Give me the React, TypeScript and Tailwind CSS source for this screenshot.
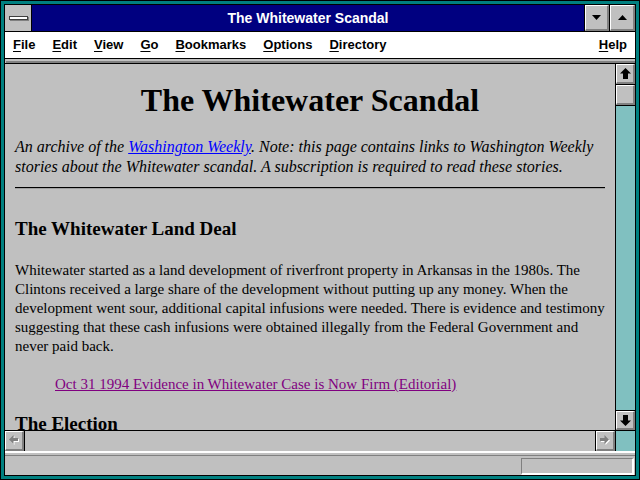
import React from 'react'

const dither = 'bg-[#80c0c0]'

function ArrowUp() {
  return (
    <svg width="11" height="11" viewBox="0 0 11 11">
      <polygon points="5.5,0 11,5.5 8,5.5 8,11 3,11 3,5.5 0,5.5" fill="#000" />
    </svg>
  )
}

function ArrowDown() {
  return (
    <svg width="11" height="11" viewBox="0 0 11 11">
      <polygon points="3,0 8,0 8,5.5 11,5.5 5.5,11 0,5.5 3,5.5" fill="#000" />
    </svg>
  )
}

function ArrowSide({ dir }: { dir: 'left' | 'right' }) {
  const pts =
    dir === 'left'
      ? '0,4.5 4.5,0 4.5,3 9,3 9,6 4.5,6 4.5,9'
      : '9,4.5 4.5,0 4.5,3 0,3 0,6 4.5,6 4.5,9'
  return (
    <svg width="11" height="11" viewBox="0 0 11 11">
      <polygon points={pts} fill="#fff" transform="translate(1,1)" />
      <polygon points={pts} fill="#808080" />
    </svg>
  )
}

function Raised({ className, children }: { className?: string; children?: React.ReactNode }) {
  return (
    <div
      className={`flex items-center justify-center bg-[#c0c0c0] border-t border-l border-t-white border-l-white border-b-2 border-r-2 border-b-[#808080] border-r-[#808080] ${className ?? ''}`}
    >
      {children}
    </div>
  )
}

function MenuItem({ label }: { label: string }) {
  return (
    <span>
      <span className="underline underline-offset-2">{label[0]}</span>
      {label.slice(1)}
    </span>
  )
}

export default function App() {
  return (
    <div className="w-[640px] h-[480px] bg-[#008080] border border-black p-[3px]">
      <div className="h-full border border-black flex flex-col bg-[#c0c0c0]">
        {/* Title bar */}
        <div className="h-[27px] flex border-b border-black bg-[#000080]">
          <div className="w-[27px] border-r border-black bg-[#c0c0c0] flex items-center justify-center">
            <div className="w-[19px] h-[4px] bg-white border border-[#404040] shadow-[1px_1px_0_#808080]" />
          </div>
          <div className="flex-1 flex items-center justify-center text-white font-bold text-[14px] font-['Liberation_Sans',Arial,sans-serif]">
            The Whitewater Scandal
          </div>
          <div className="w-[25px] border-l border-black flex">
            <Raised className="flex-1">
              <svg width="9" height="5" viewBox="0 0 9 5">
                <polygon points="0,0 9,0 4.5,5" fill="#000" />
              </svg>
            </Raised>
          </div>
          <div className="w-[26px] border-l border-black flex">
            <Raised className="flex-1">
              <svg width="9" height="5" viewBox="0 0 9 5">
                <polygon points="0,5 9,5 4.5,0" fill="#000" />
              </svg>
            </Raised>
          </div>
        </div>

        {/* Menu bar */}
        <div className="h-[27px] flex items-center border-b border-black bg-white pl-[8px] pr-[8px] text-[13px] font-bold text-black font-['Liberation_Sans',Arial,sans-serif]">
          <div className="flex gap-[17px]">
            <MenuItem label="File" />
            <MenuItem label="Edit" />
            <MenuItem label="View" />
            <MenuItem label="Go" />
            <MenuItem label="Bookmarks" />
            <MenuItem label="Options" />
            <MenuItem label="Directory" />
          </div>
          <div className="ml-auto">
            <MenuItem label="Help" />
          </div>
        </div>

        {/* top bevel */}
        <div className="h-[2px]" />
        <div className="h-[2px] bg-[#808080] ml-px" />
        <div className="h-px bg-black" />

        {/* Main */}
        <div className="h-[387px] flex">
          <div className="flex-1 flex flex-col min-w-0">
            <div className="h-[366px] overflow-hidden pl-[10px] pr-[10px] text-black font-['Liberation_Serif','Times_New_Roman',serif]">
              <h1 className="mt-[18px] text-center text-[32px] leading-[36px] font-bold">
                The Whitewater Scandal
              </h1>
              <p className="mt-[19px] italic text-[16px] leading-[20px]">
                An archive of the <span className="text-[#0000ff] underline">Washington Weekly</span>.
                Note: this page contains links to Washington Weekly stories about the Whitewater
                scandal. A subscription is required to read these stories.
              </p>
              <div className="mt-[10px] border-t border-black border-b border-b-[#a0a0a0]" />
              <h2 className="mt-[28px] text-[19px] leading-[24px] font-bold">
                The Whitewater Land Deal
              </h2>
              <p className="mt-[20px] text-[15px] leading-[19px]">
                Whitewater started as a land development of riverfront property in Arkansas in the
                1980s. The Clintons received a large share of the development without putting up
                any money. When the development went sour, additional capital infusions were
                needed. There is evidence and testimony suggesting that these cash infusions were
                obtained illegally from the Federal Government and never paid back.
              </p>
              <p className="mt-[19px] ml-[40px] text-[15px] leading-[19px]">
                <span className="text-[#800080] underline">
                  Oct 31 1994 Evidence in Whitewater Case is Now Firm (Editorial)
                </span>
              </p>
              <h2 className="mt-[18px] text-[19px] leading-[24px] font-bold">The Election</h2>
            </div>
            {/* Horizontal scrollbar */}
            <div className="h-[21px] border-t border-black flex">
              <Raised className="w-[19px]">
                <ArrowSide dir="left" />
              </Raised>
              <div className="flex-1 border-l border-r border-black bg-[#c0c0c0]" />
              <Raised className="w-[19px]">
                <ArrowSide dir="right" />
              </Raised>
            </div>
          </div>
          {/* Vertical scrollbar */}
          <div className="w-[20px] border-l border-black flex flex-col">
            <Raised className="h-[20px]">
              <ArrowUp />
            </Raised>
            <div className="h-px bg-black" />
            <Raised className="h-[20px]" />
            <div className="h-px bg-black" />
            <div className={`flex-1 ${dither}`} />
            <div className="h-px bg-black" />
            <Raised className="h-[19px]">
              <ArrowDown />
            </Raised>
            <div className={`h-[21px] border-t border-black ${dither}`} />
          </div>
        </div>

        {/* separator */}
        <div className="h-[2px] bg-white" />
        <div className="h-[2px]" />
        <div className="h-px bg-[#808080]" />

        {/* Status bar */}
        <div className="flex-1 flex justify-end pt-[2px] pr-px">
          <div className="w-[113px] h-full border-t border-l border-t-[#808080] border-l-[#808080] border-b-2 border-r-2 border-b-white border-r-white" />
        </div>
      </div>
    </div>
  )
}
